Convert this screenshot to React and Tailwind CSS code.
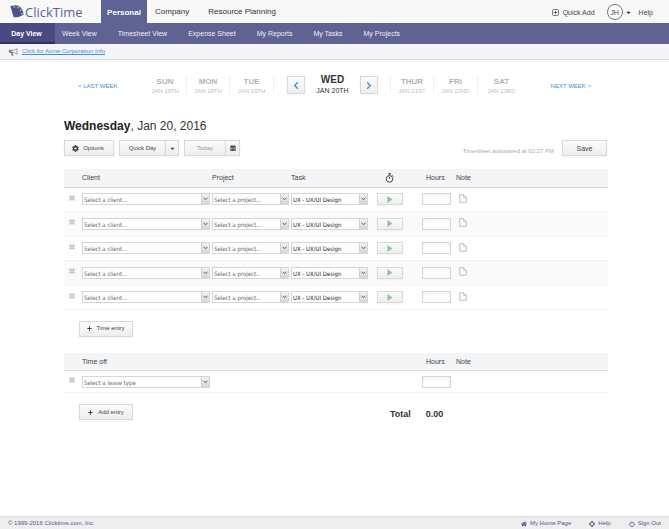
import React from "react";
import { FaCog, FaPlus, FaHome, FaCalendarAlt, FaCaretDown } from "react-icons/fa";

const BUTTON =
  "flex items-center justify-center border border-[#d9d9d9] bg-linear-to-b from-[#fbfbfb] to-[#eeeeee] shadow-xs text-[#444]";

function LogoMark() {
  return (
    <svg viewBox="0 0 42 39" className="h-[13px] w-[14px] shrink-0" aria-hidden="true">
      <path d="M1 3 L17 1 C30 2 39 13 41 29 C34 34 22 37 11 37 Z" fill="#4f5292" />
      <g fill="#e9cf45">
        <circle cx="13" cy="6" r="2.4" />
        <circle cx="24" cy="8" r="2.4" />
        <circle cx="32" cy="16" r="2.4" />
        <circle cx="36" cy="26" r="2.4" />
      </g>
    </svg>
  );
}

function Megaphone() {
  return (
    <svg viewBox="0 0 28 24" className="h-[8px] w-[10px]" fill="none" stroke="#8a8a8a" strokeWidth="2.4" aria-hidden="true">
      <path d="M26 2 V19 C20 14 15 13 10 13 H3 V7 H10 C15 7 20 6 26 2 Z" />
      <path d="M3 7 H10 V13 H3 Z" fill="#8a8a8a" />
      <path d="M8 13 L10 22 H14 L12 13" fill="#8a8a8a" />
    </svg>
  );
}

function Chevron({ d }) {
  return (
    <svg viewBox="0 0 10 10" className="size-[9px]" fill="none" stroke="#4a94d6" strokeWidth="1.6" aria-hidden="true">
      <path d={d} />
    </svg>
  );
}

function Stopwatch() {
  return (
    <svg viewBox="0 0 20 22" className="h-[10px] w-[9px]" fill="none" stroke="#3a3a3a" strokeWidth="2" role="img" aria-label="Timer">
      <circle cx="10" cy="13" r="7.4" />
      <path d="M10 13 V8.5 M7 1.5 H13 M10 1.5 V5 M16 5 L18.5 7.5" />
    </svg>
  );
}

function NoteIcon() {
  return (
    <svg viewBox="0 0 16 18" className="h-[9px] w-[8px]" fill="#fff" stroke="#b4b4b4" strokeWidth="1.8" aria-hidden="true">
      <path d="M1.5 1.5 H9.5 L14.5 6.5 V16.5 H1.5 Z" />
      <path d="M9.5 1.5 V6.5 H14.5" />
    </svg>
  );
}

function LifeRing() {
  return (
    <svg viewBox="0 0 12 12" className="size-[6px]" fill="none" stroke="currentColor" aria-hidden="true">
      <circle cx="6" cy="6" r="3.8" strokeWidth="1.6" />
      <path d="M6 0 V3 M6 9 V12 M0 6 H3 M9 6 H12" strokeWidth="3" />
    </svg>
  );
}

function PowerIcon() {
  return (
    <svg viewBox="0 0 12 12" className="size-[6px]" fill="none" stroke="currentColor" strokeWidth="1.6" aria-hidden="true">
      <path d="M3.6 2.4 A4.7 4.7 0 1 0 8.4 2.4 M6 0.5 V6" />
    </svg>
  );
}

function DeleteButton({ label }) {
  return (
    <button type="button" aria-label={label} className="mb-[3px] ml-[5px] block">
      <svg viewBox="0 0 12 12" className="size-[6px]" fill="none" stroke="#b5b5b5" aria-hidden="true">
        <path d="M1.5 1.5 L10.5 10.5 M10.5 1.5 L1.5 10.5" strokeWidth="3.6" />
        <path d="M1.5 1.5 L10.5 10.5 M10.5 1.5 L1.5 10.5" strokeWidth="1" stroke="#f4f4f4" />
      </svg>
    </button>
  );
}

function Select({ label, value, dark }) {
  return (
    <div className="relative mr-[2px] border border-[#d3d6d6] bg-white">
      <select
        aria-label={label}
        className={
          "block h-[10px] w-full appearance-none bg-transparent pl-[1px] pr-[10px] pt-[1px] font-['DejaVu_Sans_Condensed','DejaVu_Sans',sans-serif] text-[6px] leading-[9px] outline-none " +
          (dark ? "text-[#222]" : "text-[#666]")
        }
      >
        <option>{value}</option>
      </select>
      <span className="pointer-events-none absolute inset-y-0 right-0 flex w-[8px] items-center justify-center border-l border-[#d0d0d0] bg-linear-to-b from-[#f3f3f3] to-[#d6d6d6]">
        <svg viewBox="0 0 10 8" className="h-[4px] w-[5px]" fill="none" stroke="#555" strokeWidth="2" aria-hidden="true">
          <path d="M1 1.5 L5 5.5 L9 1.5" />
        </svg>
      </span>
    </div>
  );
}

function HoursInput({ label }) {
  return (
    <input
      type="text"
      aria-label={label}
      className="block h-[12px] w-[29px] border border-[#d3d6d6] bg-white px-[2px] text-[7px] shadow-inner outline-none"
    />
  );
}

function Day({ name, date, className = "" }) {
  return (
    <a href="#day" className={"flex h-[18px] flex-col items-center text-[#b3b3b3] " + className}>
      <span className="text-[8px] leading-[11px] font-bold">{name}</span>
      <span className="text-[6px] leading-[8px] text-[#c0c0c0]">{date}</span>
    </a>
  );
}

const TABS = ["Week View", "Timesheet View", "Expense Sheet", "My Reports", "My Tasks", "My Projects"];
const ROWS = [1, 2, 3, 4, 5];

function Columns() {
  return (
    <colgroup>
      <col className="w-[18px]" />
      <col className="w-[130px]" />
      <col className="w-[79px]" />
      <col className="w-[86px]" />
      <col className="w-[45px]" />
      <col className="w-[34px]" />
      <col />
    </colgroup>
  );
}

export default function App() {
  return (
    <div className="flex min-h-screen flex-col bg-white font-['Liberation_Sans',Arial,sans-serif] text-[7px] leading-[9px] text-[#444]">
      <header>
        <div className="flex h-[23px] items-stretch bg-[#f8f8f8]">
          <a href="#home" className="flex w-[101px] items-center gap-px pl-[10px] text-[#5c5f96]">
            <LogoMark />
            <span className="font-['Open_Sans',sans-serif] text-[13px] leading-[16px] font-medium">ClickTime</span>
          </a>
          <nav aria-label="Sections" className="flex items-center text-[8px] leading-[10px] text-[#333]">
            <a href="#personal" className="flex h-full w-[46px] items-center justify-center bg-[#5e6393] pt-[2px] font-bold text-white">
              Personal
            </a>
            <a href="#company" className="ml-[8px] pt-px">Company</a>
            <a href="#planning" className="ml-[19px] pt-px">Resource Planning</a>
          </nav>
          <div className="ml-auto flex items-center pt-px pr-[16px]">
            <button type="button" className="flex items-center gap-[4px]">
              <svg viewBox="0 0 14 14" className="size-[7px]" fill="none" stroke="#555" strokeWidth="1.5" aria-hidden="true">
                <rect x="1" y="1" width="12" height="12" rx="2" />
                <path d="M7 3.5 V10.5 M3.5 7 H10.5" />
              </svg>
              Quick Add
            </button>
            <button type="button" className="ml-[12px] flex items-center gap-[2px]">
              <span className="flex size-[16px] items-center justify-center rounded-full border border-[#777] bg-white">JH</span>
              <FaCaretDown className="size-[7px] text-[#222]" />
            </button>
            <a href="#help" className="ml-[7px]">Help</a>
          </div>
        </div>
        <nav aria-label="Views" className="flex h-[21px] items-center gap-[21px] bg-[#5e6393] text-[#eeeef6]">
          <a href="#day-view" className="-mr-[14px] flex h-full w-[55px] items-center justify-center border-b-2 border-[#2f3262] bg-[#474b82] pt-px pr-[2px] font-bold text-white">
            Day View
          </a>
          {TABS.map((t) => (
            <a key={t} href="#view">{t}</a>
          ))}
        </nav>
        <div className="flex h-[16px] items-center gap-[4px] border-b border-[#dcdcdc] bg-[#f4f5f8] pl-[8px]">
          <Megaphone />
          <a href="#info" className="text-[6px] text-[#3f8fd2] underline">Click for Acme Corporation Info</a>
        </div>
      </header>

      <main className="flex-1 pr-[61px] pl-[64px]">
        <nav aria-label="Week" className="mt-[16px] flex items-center">
          <a href="#last" className="w-[80px] pt-[2px] pl-[14px] text-[6px] text-[#3f8fd2]">&lt; LAST WEEK</a>
          <Day name="SUN" date="JAN 19TH" className="w-[43px] border-r border-[#eee]" />
          <Day name="MON" date="JAN 18TH" className="w-[43px] border-r border-[#eee]" />
          <Day name="TUE" date="JAN 19TH" className="w-[44px] border-r border-[#eee]" />
          <div className="flex w-[117px] items-center justify-between border-r border-[#eee] pr-[12px] pl-[13px]">
            <button type="button" aria-label="Previous day" className={BUTTON + " size-[18px]"}>
              <Chevron d="M6.5 1.5 L3 5 L6.5 8.5" />
            </button>
            <div className="flex h-[18px] flex-col items-center text-[#333]">
              <span className="-mt-[2px] text-[10px] leading-[12px] font-bold">WED</span>
              <span className="leading-[9px]">JAN 20TH</span>
            </div>
            <button type="button" aria-label="Next day" className={BUTTON + " size-[18px]"}>
              <Chevron d="M3.5 1.5 L7 5 L3.5 8.5" />
            </button>
          </div>
          <Day name="THUR" date="JAN 21ST" className="w-[43px] border-r border-[#eee]" />
          <Day name="FRI" date="JAN 22ND" className="w-[44px] border-r border-[#eee]" />
          <Day name="SAT" date="JAN 23RD" className="w-[47px]" />
          <a href="#next" className="ml-auto pt-[2px] pr-[17px] text-[6px] text-[#3f8fd2]">NEXT WEEK &gt;</a>
        </nav>

        <h1 className="mt-[24px] text-[12px] leading-[16px] text-[#333]">
          <strong className="text-[#222]">Wednesday</strong>, Jan 20, 2016
        </h1>

        <div className="mt-[6px] flex items-start text-[6px]">
          <button type="button" className={BUTTON + " h-[16px] w-[50px] gap-[4px] pr-[2px]"}>
            <FaCog className="size-[7px]" />
            Options
          </button>
          <div className="ml-[5px] flex">
            <button type="button" className={BUTTON + " h-[16px] w-[47px]"}>Quick Day</button>
            <button type="button" aria-label="Quick Day choices" className={BUTTON + " -ml-px h-[16px] w-[14px]"}>
              <FaCaretDown className="size-[7px]" />
            </button>
          </div>
          <div className="ml-[5px] flex">
            <button type="button" className={BUTTON + " h-[16px] w-[42px]"}>
              <span className="text-[#999]">Today</span>
            </button>
            <button type="button" aria-label="Pick a date" className={BUTTON + " -ml-px h-[16px] w-[15px]"}>
              <FaCalendarAlt className="size-[6px]" />
            </button>
          </div>
          <p className="mt-[7px] ml-auto text-[#aaa]">Timesheet autosaved at 02:27 PM</p>
          <button type="button" className={BUTTON + " mr-[1px] ml-[8px] h-[16px] w-[45px] text-[7px]"}>Save</button>
        </div>

        <table className="mt-[13px] w-full table-fixed border-collapse text-left">
          <Columns />
          <thead>
            <tr className="h-[18px] border-b border-[#d9dbdc] bg-[#f4f5f7]">
              <td />
              <th className="p-0 font-normal">Client</th>
              <th className="p-0 font-normal">Project</th>
              <th className="p-0 font-normal">Task</th>
              <th className="p-0 pl-[8px]"><Stopwatch /></th>
              <th className="p-0 pl-[4px] font-normal">Hours</th>
              <th className="p-0 font-normal">Note</th>
            </tr>
          </thead>
          <tbody>
            {ROWS.map((n) => (
              <tr key={n} className="h-[25px] border-b border-[#f3f3f3] odd:h-[24px] even:bg-[#fafafa]">
                <td className="p-0"><DeleteButton label={"Delete entry " + n} /></td>
                <td className="p-0"><Select label={"Client " + n} value="Select a client..." /></td>
                <td className="p-0"><Select label={"Project " + n} value="Select a project..." /></td>
                <td className="p-0 pr-[7px]"><Select label={"Task " + n} value="UX - UX/UI Design" dark /></td>
                <td className="p-0">
                  <button type="button" aria-label={"Start timer " + n} className={BUTTON + " h-[12px] w-[26px]"}>
                    <svg viewBox="0 0 6 8" className="h-[7px] w-[6px]" fill="#94c794" aria-hidden="true">
                      <path d="M0 0 L6 4 L0 8 Z" />
                    </svg>
                  </button>
                </td>
                <td className="p-0"><HoursInput label={"Hours " + n} /></td>
                <td className="p-0">
                  <button type="button" aria-label={"Note " + n} className="mb-[2px] ml-[3px] block"><NoteIcon /></button>
                </td>
              </tr>
            ))}
          </tbody>
        </table>

        <button type="button" className={BUTTON + " mt-[11px] ml-[15px] h-[16px] w-[54px] gap-[4px] text-[6px]"}>
          <FaPlus className="size-[5px]" />
          Time entry
        </button>

        <table className="mt-[16px] w-full table-fixed border-collapse text-left">
          <Columns />
          <thead>
            <tr className="h-[18px] border-b border-[#d9dbdc] bg-[#f4f5f7]">
              <td />
              <th className="p-0 font-normal" colSpan={4}>Time off</th>
              <th className="p-0 pl-[4px] font-normal">Hours</th>
              <th className="p-0 font-normal">Note</th>
            </tr>
          </thead>
          <tbody>
            <tr className="h-[22px] border-b border-[#f3f3f3]">
              <td className="p-0"><DeleteButton label="Delete leave" /></td>
              <td className="p-0"><Select label="Leave type" value="Select a leave type" /></td>
              <td colSpan={3} />
              <td className="p-0"><HoursInput label="Leave hours" /></td>
              <td />
            </tr>
          </tbody>
        </table>

        <div className="mt-[11px] flex items-center pl-[15px]">
          <button type="button" className={BUTTON + " h-[16px] w-[54px] gap-[5px] text-[6px]"}>
            <FaPlus className="size-[5px]" />
            Add entry
          </button>
          <p className="ml-[257px] flex gap-[15px] pt-[4px] text-[9px] leading-[11px] font-bold text-[#333]">
            <span>Total</span>
            <span>0.00</span>
          </p>
        </div>
      </main>

      <footer className="flex h-[13px] items-center border-t border-[#dedede] bg-[#eeeeee] px-[8px] pt-px text-[6px] text-[#52558c]">
        <span>© 1999-2016 Clicktime.com, Inc.</span>
        <nav aria-label="Footer" className="ml-auto flex gap-[18px]">
          <a href="#home" className="flex items-center gap-[3px]"><FaHome className="size-[6px]" />My Home Page</a>
          <a href="#help" className="flex items-center gap-[3px]"><LifeRing />Help</a>
          <a href="#out" className="flex items-center gap-[3px]"><PowerIcon />Sign Out</a>
        </nav>
      </footer>
    </div>
  );
}
